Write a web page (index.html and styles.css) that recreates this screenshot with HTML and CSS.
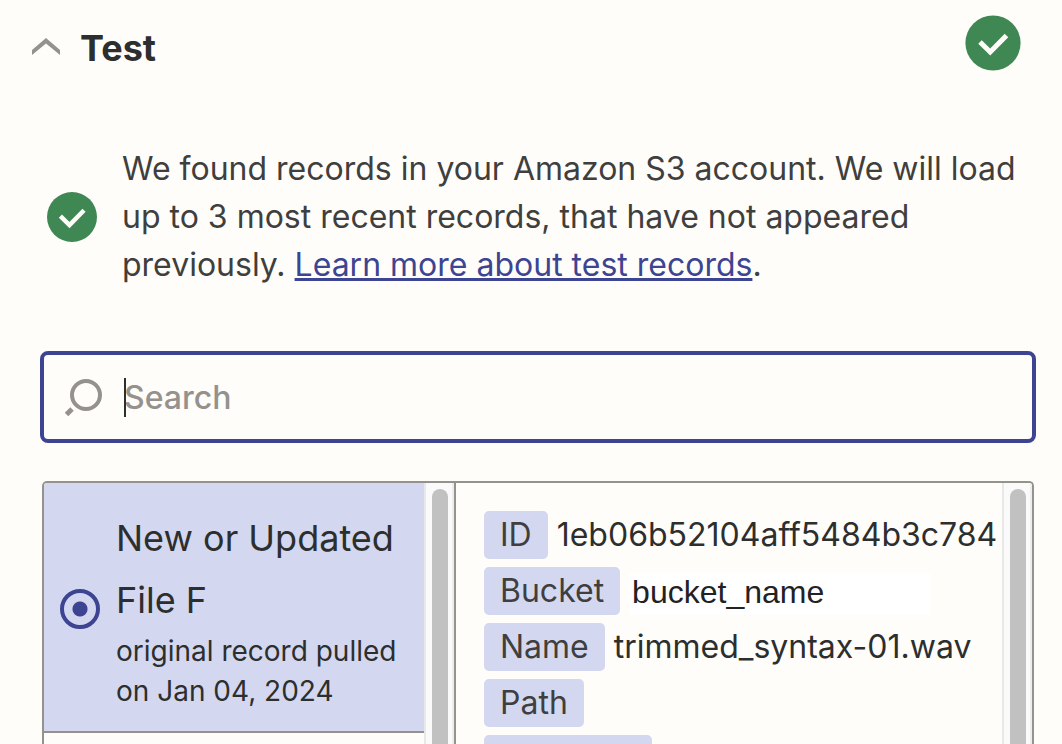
FILE: index.html
```html
<!DOCTYPE html>
<html lang="en">
<head>
<meta charset="utf-8">
<title>Test</title>
<link rel="stylesheet" href="styles.css">
</head>
<body>
<header class="test-head">
	<button class="collapse-btn" type="button" aria-expanded="true">
		<svg width="28" height="20" viewBox="0 0 28 20" aria-hidden="true"><path d="M0 12 14 0l14 12v5L14 5.500 0 17z" fill="#95928e"/></svg>
		<span class="test-title">Test</span>
	</button>
	<svg class="check-large" viewBox="0 0 56 56" aria-hidden="true"><circle cx="28" cy="28" r="27.600" fill="#3f8753"/><path d="M15 27 25.200 37 41.500 20.500" fill="none" stroke="#fffdf9" stroke-width="5"/></svg>
</header>
<div class="message">
	<svg class="check-small" viewBox="0 0 56 56" aria-hidden="true"><circle cx="28" cy="28" r="28" fill="#3f8753"/><path d="M15 27 25.200 37 41.500 20.500" fill="none" stroke="#fffdf9" stroke-width="5"/></svg>
	<p class="message-text">We found records in your Amazon S3 account. We will load up to 3 most recent records, that have not appeared previously. <a href="#">Learn more about test records</a>.</p>
</div>
<label class="search-box">
	<svg width="38" height="38" viewBox="0 0 38 38" aria-hidden="true"><g fill="none" stroke="#95928e" stroke-width="4"><circle cx="21" cy="17" r="14"/><path d="M7 31 1.500 36.500" stroke-width="5"/></g></svg>
	<span class="search-field">
		<input class="search-in" type="text" placeholder="Search" aria-label="Search">
		<span class="caret"></span>
	</span>
</label>
<div class="records">
	<div class="record-list">
		<div class="record-items">
			<label class="record">
				<input class="record-radio" type="radio" name="record" checked>
				<span class="record-text">
					<span class="record-name">New or Updated File F</span>
					<span class="record-note">original record pulled on Jan 04, 2024</span>
				</span>
			</label>
		</div>
		<div class="scroll-track"><div class="scroll-thumb"></div></div>
	</div>
	<div class="record-detail">
		<dl class="fields">
			<div class="field"><dt>ID</dt><dd>1eb06b52104aff5484b3c784</dd></div>
			<div class="field"><dt>Bucket</dt><dd class="bucket">bucket_name</dd></div>
			<div class="field"><dt>Name</dt><dd>trimmed_syntax-01.wav</dd></div>
			<div class="field"><dt>Path</dt><dd></dd></div>
			<div class="field"><dt class="blank"></dt><dd></dd></div>
		</dl>
		<div class="scroll-track"><div class="scroll-thumb"></div></div>
	</div>
</div>
</body>
</html>
```

FILE: styles.css
```css
*{
	box-sizing: border-box;
}
body{
	display: flex;
	flex-direction: column;
	height: 100vh;
	margin: 0;
	overflow: hidden;
	background: #fffdf9;
	color: #2d2e2e;
	font-family: Inter, "Liberation Sans", sans-serif;
	font-size: 32px;
	line-height: 48px;
}
svg{
	display: block;
	flex: none;
}
.test-head{
	display: flex;
	justify-content: space-between;
	align-items: flex-start;
	padding: 15px 41px 0 32px;
}
.collapse-btn{
	display: flex;
	align-items: center;
	gap: 20px;
	padding: 8px 0 0;
	border: 0;
	background: none;
	color: inherit;
	font: inherit;
}
.test-title{
	font-size: 36px;
	font-weight: 700;
	line-height: 50px;
}
.check-large{
	width: 56px;
	height: 56px;
}
.check-small{
	width: 50px;
	height: 50px;
}
.message{
	display: flex;
	align-items: center;
	gap: 25px;
	margin: 72px 40px 0 47px;
	color: #403f3e;
}
.message-text{
	margin: 0;
}
.message a{
	color: #3d4592;
	text-decoration-thickness: 3px;
}
.search-box{
	display: flex;
	align-items: center;
	gap: 21px;
	height: 92px;
	margin: 62px 26px 0 40px;
	padding: 0 21px;
	border: 4px solid #3d4592;
	border-radius: 8px;
}
.search-field{
	position: relative;
	flex: 1;
	display: flex;
}
.search-in{
	width: 100%;
	height: 50px;
	padding: 0;
	border: 0;
	outline: none;
	background: none;
	color: #2d2e2e;
	font: inherit;
	font-weight: 500;
}
.search-in::placeholder{
	color: #95928e;
	opacity: 1;
}
.caret{
	position: absolute;
	top: 6px;
	left: 0;
	width: 2px;
	height: 39px;
	background: #2d2e2e;
}
.records{
	display: flex;
	flex: 1;
	min-height: 0;
	margin: 38px 28px 0 42px;
	border: 2px solid #95928e;
	border-bottom: 0;
	border-radius: 5px 5px 0 0;
	overflow: hidden;
}
.record-list{
	display: flex;
	flex: 0 0 412px;
	border-right: 2px solid #95928e;
}
.record-items{
	flex: 1;
}
.record{
	display: flex;
	align-items: center;
	gap: 16px;
	padding: 24px 16px 20px;
	border-bottom: 2px solid #95928e;
	background: #d3d8f0;
}
.record-radio{
	appearance: none;
	flex: none;
	width: 40px;
	height: 40px;
	margin: 0;
	border: 4px solid #3d4592;
	border-radius: 50%;
	background: radial-gradient(circle, #3d4592 7px, #d3d8f0 8px);
}
.record-name{
	display: block;
	font-size: 36px;
	line-height: 62px;
}
.record-note{
	display: block;
	font-size: 28px;
	line-height: 40px;
}
.scroll-track{
	flex: none;
	width: 30px;
	padding: 6px 0 0 6px;
	border-left: 2px solid #e8e8e8;
	border-right: 2px solid #ededed;
	background: #fafafa;
}
.scroll-thumb{
	width: 16px;
	height: 100%;
	border-radius: 8px 8px 0 0;
	background: #c1c1c1;
}
.record-detail{
	display: flex;
	flex: 1;
	min-width: 0;
}
.fields{
	flex: 1;
	min-width: 0;
	margin: 0;
	padding: 28px 0 0 28px;
	overflow: hidden;
}
.field{
	display: flex;
	align-items: center;
	gap: 9px;
	margin-bottom: 8px;
}
.field dt{
	height: 48px;
	padding: 0 16px;
	border-radius: 5px;
	background: #d3d8f0;
	color: #403f3e;
}
.field dd{
	margin: 0;
	white-space: nowrap;
}
.field .blank{
	width: 168px;
}
.field .bucket{
	align-self: flex-end;
	width: 301px;
	height: 42px;
	padding-left: 3px;
	background: #ffffff;
	color: #222222;
	font-family: "Liberation Sans", Arial, sans-serif;
	font-size: 32px;
	line-height: 38px;
}
```
